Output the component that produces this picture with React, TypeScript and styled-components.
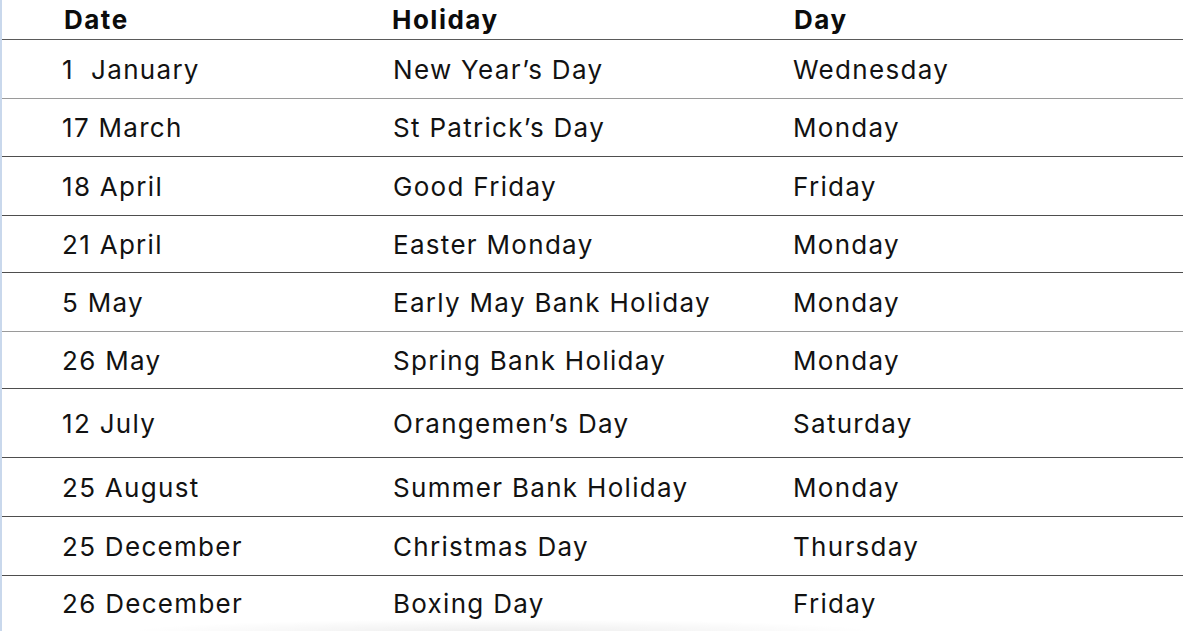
import styled, { createGlobalStyle } from 'styled-components'

const GlobalStyle = createGlobalStyle`
	html, body {
		margin: 0;
		padding: 0;
		background: #ffffff;
	}
	body {
		font-family: 'Inter', 'Open Sans', sans-serif;
		color: #111111;
	}
`

type Holiday = {
	date: string
	name: string
	day: string
	height: number
	light?: boolean
}

const holidays: Holiday[] = [
	{ date: '1  January', name: 'New Year’s Day', day: 'Wednesday', height: 59, light: true },
	{ date: '17 March', name: 'St Patrick’s Day', day: 'Monday', height: 58 },
	{ date: '18 April', name: 'Good Friday', day: 'Friday', height: 59 },
	{ date: '21 April', name: 'Easter Monday', day: 'Monday', height: 57 },
	{ date: '5 May', name: 'Early May Bank Holiday', day: 'Monday', height: 59, light: true },
	{ date: '26 May', name: 'Spring Bank Holiday', day: 'Monday', height: 57 },
	{ date: '12 July', name: 'Orangemen’s Day', day: 'Saturday', height: 69 },
	{ date: '25 August', name: 'Summer Bank Holiday', day: 'Monday', height: 59 },
	{ date: '25 December', name: 'Christmas Day', day: 'Thursday', height: 59 },
	{ date: '26 December', name: 'Boxing Day', day: 'Friday', height: 55 },
]

export default function App() {
	return (
		<>
			<GlobalStyle />
			<Page>
				<Table>
					<HeaderRow>
						<HeadCell>Date</HeadCell>
						<HeadCell>Holiday</HeadCell>
						<HeadCell>Day</HeadCell>
					</HeaderRow>
					{holidays.map((h, i) => (
						<Row key={h.date} $h={h.height} $light={h.light} $last={i === holidays.length - 1}>
							<Cell>{h.date}</Cell>
							<Cell>{h.name}</Cell>
							<Cell>{h.day}</Cell>
						</Row>
					))}
				</Table>
				<BottomShade />
			</Page>
		</>
	)
}

const Page = styled.main`
	position: relative;
	width: 1183px;
	height: 631px;
	overflow: hidden;
	border-left: 2px solid #c9d8ec;
	box-sizing: border-box;
	background: #ffffff;
`

const Table = styled.div`
	display: flex;
	flex-direction: column;
`

const HeaderRow = styled.div`
	display: grid;
	grid-template-columns: 328px 402px 1fr;
	align-items: center;
	height: 39px;
	padding-left: 62px;
	border-bottom: 1.5px solid #5a5a5a;
`

const HeadCell = styled.div`
	font-size: 26px;
	font-weight: 700;
	letter-spacing: 1.5px;
	color: #0c0c0c;
	white-space: pre;
`

const Row = styled.div<{ $h: number; $light?: boolean; $last?: boolean }>`
	display: grid;
	grid-template-columns: 331px 400px 1fr;
	align-items: center;
	height: ${({ $h }) => $h}px;
	box-sizing: border-box;
	padding-left: 60px;
	border-bottom: ${({ $last, $light }) =>
		$last ? 'none' : `1.5px solid ${$light ? '#9a9a9a' : '#4e4e4e'}`};
`

const Cell = styled.div`
	font-size: 26px;
	font-weight: 400;
	letter-spacing: 1.3px;
	color: #121212;
	white-space: pre;
`

const BottomShade = styled.div`
	position: absolute;
	left: 120px;
	right: 300px;
	bottom: -14px;
	height: 26px;
	background: radial-gradient(ellipse at center, rgba(0, 0, 0, 0.07), rgba(0, 0, 0, 0) 70%);
	pointer-events: none;
`
